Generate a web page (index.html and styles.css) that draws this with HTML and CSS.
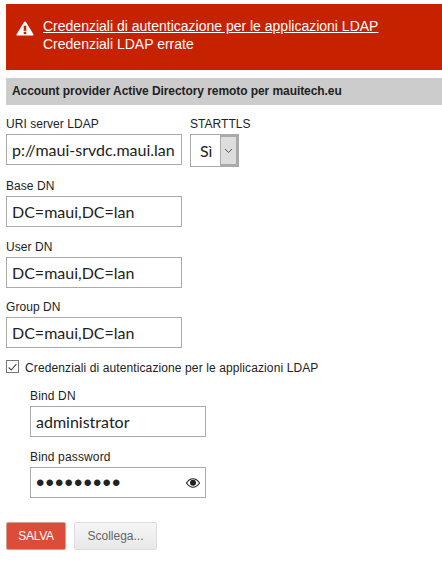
FILE: index.html
```html
<!DOCTYPE html>
<html lang="it">
<head>
<meta charset="utf-8">
<title>Account provider</title>
<link rel="stylesheet" href="styles.css">
</head>
<body>
<div class="alert">
  <svg class="alert-icon" width="18" height="15" viewBox="0 0 18 16" preserveAspectRatio="none"><path d="M9 0.5c.5 0 .9.3 1.100.7l7.300 12.800c.4.700 0 1.500-.9 1.500H1.500c-.9 0-1.300-.8-.9-1.500L7.900 1.200C8.100.8 8.500.5 9 .5z" fill="#fff"/><rect x="7.700" y="5" width="2.600" height="5.500" fill="#c72200"/><rect x="7.700" y="11.500" width="2.600" height="2.500" fill="#c72200"/></svg>
  <div class="alert-text">
    <a class="alert-link" href="#">Credenziali di autenticazione per le applicazioni LDAP</a>
    <div class="alert-detail">Credenziali LDAP errate</div>
  </div>
</div>
<h2 class="section">Account provider Active Directory remoto per mauitech.eu</h2>
<form class="form">
  <div class="row">
    <div class="field">
      <label class="label">URI server LDAP</label>
      <input class="input" type="text" value="p://maui-srvdc.maui.lan">
    </div>
    <div class="field tls">
      <label class="label">STARTTLS</label>
      <div class="select"><span class="select-value">Sì</span><span class="select-arrow"><svg width="9" height="6" viewBox="0 0 9 6"><path d="M1 1l3.500 3.500L8 1" fill="none" stroke="#555" stroke-width="1"/></svg></span></div>
    </div>
  </div>
  <div class="field"><label class="label">Base DN</label><input class="input" type="text" value="DC=maui,DC=lan"></div>
  <div class="field"><label class="label">User DN</label><input class="input" type="text" value="DC=maui,DC=lan"></div>
  <div class="field"><label class="label">Group DN</label><input class="input" type="text" value="DC=maui,DC=lan"></div>
  <div class="check-row">
    <span class="check"><svg width="13" height="13" viewBox="0 0 13 13"><path d="M2 6.500l3 3L11 2.500" fill="none" stroke="#444" stroke-width="1.300"/></svg></span>
    <span class="check-label">Credenziali di autenticazione per le applicazioni LDAP</span>
  </div>
  <div class="nested">
    <div class="field"><label class="label">Bind DN</label><input class="input" type="text" value="administrator"></div>
    <div class="field"><label class="label">Bind password</label>
      <div class="pass">
        <span class="dots">•••••••••</span>
        <svg class="eye" width="14" height="10" viewBox="0 0 14 10"><path d="M.5 5C2.500 2 4.500.8 7 .8S11.500 2 13.500 5C11.500 8 9.500 9.200 7 9.200S2.500 8 .5 5z" fill="none" stroke="#222" stroke-width="1.100"/><circle cx="7" cy="4.800" r="3" fill="#222"/></svg>
      </div>
    </div>
  </div>
  <div class="actions">
    <button class="btn primary" type="button">SALVA</button>
    <button class="btn default" type="button">Scollega...</button>
  </div>
</form>
</body>
</html>
```
FILE: styles.css
```css
* { box-sizing: border-box; }
body { margin: 0; padding: 4px 0 0 6px; background: #fff; font-family: "Liberation Sans", Arial, sans-serif; font-size: 12px; color: #222; }
.alert { display: flex; align-items: flex-start; gap: 9px; height: 66px; padding: 14px 10px 0 10px; background: #c72200; color: #fff; font-size: 14px; line-height: 17px; }
.alert-icon { margin-top: 3px; flex: none; }
.alert-link { color: #fff; text-decoration: underline; }
.alert-detail { margin-top: 1px; }
.section { margin: 8px 0 0; height: 27px; padding: 0 6px; background: #ccc; color: #222; font-size: 12px; line-height: 27px; font-weight: bold; letter-spacing: -0.07px; }
.form { display: block; }
.row { display: flex; gap: 8px; margin-top: 11px; margin-bottom: 1.500px; }
.row .label { height: 16px; padding-top: 0; }
.field { display: block; }
.label { display: block; height: 17px; padding-top: 1px; line-height: 16px; margin: 0 0 2px; color: #222; letter-spacing: 0.05px; }
.input { display: block; width: 176px; height: 31px; margin: 0 0 10.500px; padding: 0 5px; border: 1px solid #aaa; border-radius: 0; background: #fff; color: #222; font-family: Lato, sans-serif; font-size: 16px; outline: 0; }
.select { display: flex; width: 49px; height: 33px; border: 1px solid #aaa; background: #fff; }
.select-value { flex: 1; font-family: Lato, sans-serif; font-size: 16px; line-height: 31px; padding-left: 9px; color: #222; }
.select-arrow { width: 18px; background: #ddd; border: 2px solid #aaa; border-width: 2px 2px 2px 1px; display: flex; align-items: center; justify-content: center; }
.check-row { display: flex; align-items: center; gap: 6px; height: 18px; }
.check { display: flex; width: 13px; height: 13px; margin-top: -3px; border: 1px solid #777; background: #fff; }
.check-label { color: #222; letter-spacing: 0.11px; }
.nested { padding-left: 24px; margin-top: 10.500px; }
.nested .label { letter-spacing: 0.15px; }
.pass { width: 176px; height: 31px; border: 1px solid #aaa; padding: 0 5px; display: flex; align-items: center; justify-content: space-between; }
.dots { font-family: "Liberation Sans", sans-serif; font-size: 24px; line-height: 29px; letter-spacing: 1.100px; color: #222; }
.eye { flex: none; margin-top: 2px; }
.actions { display: flex; gap: 8px; margin-top: 24px; }
.btn { height: 28px; border-radius: 2px; font-family: "Liberation Sans", Arial, sans-serif; font-size: 12px; }
.primary { width: 60px; background: #dd4b39; border: 1px solid #d0a090; color: #fff; letter-spacing: -0.3px; }
.default { width: 83px; background: linear-gradient(#f5f5f5, #e8e8e8); border: 1px solid #ddd; color: #666; }
```
